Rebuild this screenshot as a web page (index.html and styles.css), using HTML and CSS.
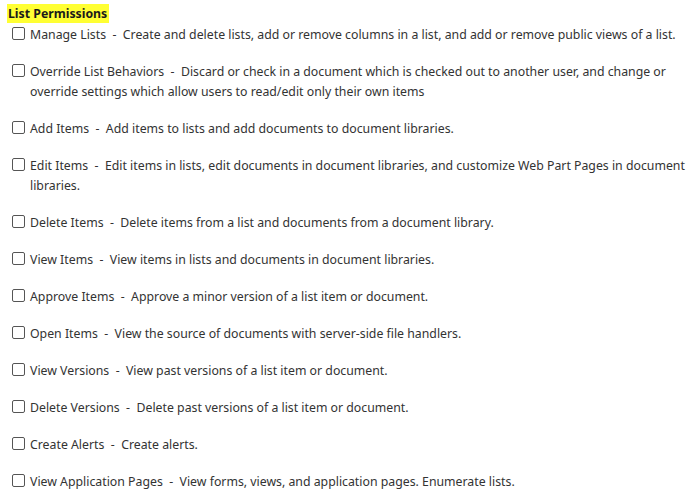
FILE: index.html
```html
<!DOCTYPE html>
<html>
<head>
<meta charset="utf-8">
<link rel="stylesheet" href="styles.css">
</head>
<body>
<div class="page">
  <div class="heading"><span class="hl">List Permissions</span></div>
  <div class="list">
    <div class="item"><span class="box"></span><span class="txt">Manage Lists&nbsp; -&nbsp; Create and delete lists, add or remove columns in a list, and add or remove public views of a list.</span></div>
    <div class="item"><span class="box"></span><span class="txt">Override List Behaviors&nbsp; -&nbsp; Discard or check in a document which is checked out to another user, and change or override settings which allow users to read/edit only their own items</span></div>
    <div class="item"><span class="box"></span><span class="txt">Add Items&nbsp; -&nbsp; Add items to lists and add documents to document libraries.</span></div>
    <div class="item"><span class="box"></span><span class="txt">Edit Items&nbsp; -&nbsp; Edit items in lists, edit documents in document libraries, and customize Web Part Pages in document libraries.</span></div>
    <div class="item"><span class="box"></span><span class="txt">Delete Items&nbsp; -&nbsp; Delete items from a list and documents from a document library.</span></div>
    <div class="item"><span class="box"></span><span class="txt">View Items&nbsp; -&nbsp; View items in lists and documents in document libraries.</span></div>
    <div class="item"><span class="box"></span><span class="txt">Approve Items&nbsp; -&nbsp; Approve a minor version of a list item or document.</span></div>
    <div class="item"><span class="box"></span><span class="txt">Open Items&nbsp; -&nbsp; View the source of documents with server-side file handlers.</span></div>
    <div class="item"><span class="box"></span><span class="txt">View Versions&nbsp; -&nbsp; View past versions of a list item or document.</span></div>
    <div class="item"><span class="box"></span><span class="txt">Delete Versions&nbsp; -&nbsp; Delete past versions of a list item or document.</span></div>
    <div class="item"><span class="box"></span><span class="txt">Create Alerts&nbsp; -&nbsp; Create alerts.</span></div>
    <div class="item"><span class="box"></span><span class="txt">View Application Pages&nbsp; -&nbsp; View forms, views, and application pages. Enumerate lists.</span></div>
  </div>
</div>
</body>
</html>
```
FILE: styles.css
```css
html, body {
  margin: 0;
  padding: 0;
  background: #ffffff;
}
.page {
  padding: 4px 6px 0 7px;
  font-family: "Noto Sans", "Open Sans", sans-serif;
  font-size: 12.3px;
  color: #333333;
}
.heading {
  line-height: 19px;
}
.hl {
  display: inline-block;
  background: #ffff33;
  font-weight: bold;
  color: #1a1a1a;
  padding: 0 2px 0 1px;
}
.list {
  display: flex;
  flex-direction: column;
  gap: 17px;
  padding-left: 5px;
  margin-top: 2px;
}
.item {
  display: flex;
  align-items: flex-start;
  gap: 5px;
  line-height: 20px;
}
.box {
  flex: none;
  width: 11px;
  height: 11px;
  border: 1px solid #555555;
  border-radius: 2px;
  margin-top: 2px;
}
.txt {
  flex: 1;
}
```
